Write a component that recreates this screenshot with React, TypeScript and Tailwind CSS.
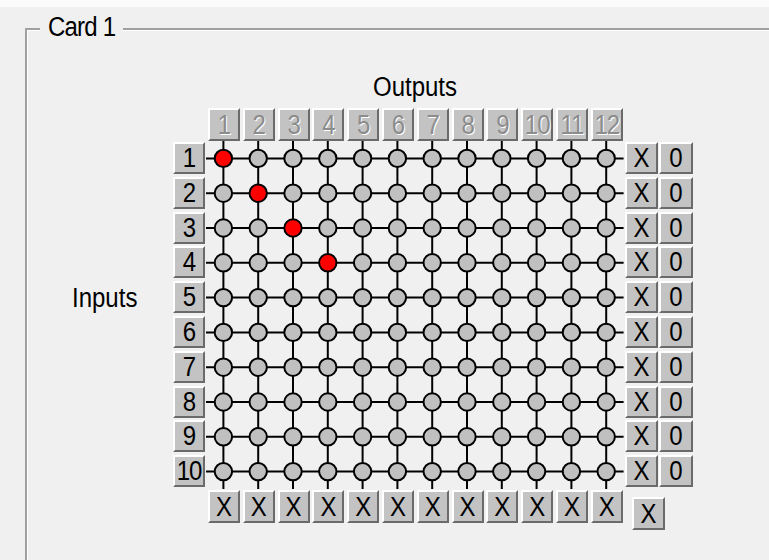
import React from 'react';

const outputs = Array.from({ length: 12 }, (_, i) => i + 1);
const inputs = Array.from({ length: 10 }, (_, i) => i + 1);
// input -> output routes that are switched on
const routes: Record<number, number> = { 1: 1, 2: 2, 3: 3, 4: 4 };

const PITCH = 34.8;

const btn =
  'flex items-center justify-center bg-[#c3c3c3] border-2 border-t-white border-l-white border-r-[#6a6a6a] border-b-[#6a6a6a] text-[24px] leading-none';

// old-style dialog font is taller than it is wide
const tall = 'inline-block scale-y-[1.15]';

function Matrix() {
  const w = PITCH * 12;
  const h = PITCH * 10;
  return (
    <svg width={w} height={h} className="block">
      {outputs.map((o) => {
        const x = PITCH / 2 + (o - 1) * PITCH;
        return <line key={'v' + o} x1={x} y1={0} x2={x} y2={h} stroke="#000" strokeWidth={2} />;
      })}
      {inputs.map((i) => {
        const y = PITCH / 2 + (i - 1) * PITCH;
        return <line key={'h' + i} x1={0} y1={y} x2={w} y2={y} stroke="#000" strokeWidth={2} />;
      })}
      {inputs.map((i) =>
        outputs.map((o) => (
          <circle
            key={i + '-' + o}
            cx={PITCH / 2 + (o - 1) * PITCH}
            cy={PITCH / 2 + (i - 1) * PITCH}
            r={8.7}
            fill={routes[i] === o ? '#ff0000' : '#c0c0c0'}
            stroke="#000"
            strokeWidth={2}
          />
        ))
      )}
    </svg>
  );
}

export default function App() {
  return (
    <div className="flex h-[560px] w-[769px] flex-col overflow-hidden bg-[#f0f0f0] font-['Liberation_Sans',Arial,sans-serif] text-black">
      <div className="h-[7px] bg-[#fbfbfb]" />

      {/* Card group box */}
      <div className="relative ml-[25px] mt-[21px] flex-1 border-l-2 border-t-2 border-[#a0a0a0] shadow-[inset_1px_1px_0_#fff]">
        <div className="absolute -top-[15px] left-[13px] bg-[#f0f0f0] px-[8px] text-[24px] leading-[24px] tracking-[-0.8px]">
          <span className={tall}>Card 1</span>
        </div>

        <div className="grid grid-cols-[146px_33px_418px_34px_35px]">
          {/* Outputs label */}
          <div className="col-start-3 pb-[9px] pt-[45px] text-center text-[24px] leading-[24px]">
            <span className={tall}>Outputs</span>
          </div>

          {/* Output header buttons */}
          <div className="col-start-3 flex h-[33px]">
            {outputs.map((o) => (
              <div key={o} className="w-[34.8px] pl-[2px]">
                <div className={btn + ' h-full w-[32px] tracking-[-1px] text-[#8c8c8c] [text-shadow:1px_1px_0_#fff]'}>
                  <span className={tall}>{o}</span>
                </div>
              </div>
            ))}
          </div>

          {/* Inputs label */}
          <div className="col-start-1 pl-[45px] pt-[145px] text-[24px] leading-[24px]">
            <span className={tall}>Inputs</span>
          </div>

          {/* Input buttons */}
          <div className="flex flex-col">
            {inputs.map((i) => (
              <div key={i} className="h-[34.8px] pt-[1px]">
                <div className={btn + ' h-[32px] w-[32px] tracking-[-1px]'}>
                  <span className={tall}>{i}</span>
                </div>
              </div>
            ))}
          </div>

          <Matrix />

          {/* Clear-row buttons */}
          <div className="flex flex-col">
            {inputs.map((i) => (
              <div key={i} className="h-[34.8px] pl-[1px] pt-[1px]">
                <div className={btn + ' h-[32px] w-[33px]'}>
                  <span className={tall}>X</span>
                </div>
              </div>
            ))}
          </div>

          {/* Row counters */}
          <div className="flex flex-col">
            {inputs.map((i) => (
              <div key={i} className="h-[34.8px] pl-[1px] pt-[1px]">
                <div className={btn + ' h-[32px] w-[34px]'}>
                  <span className={tall}>0</span>
                </div>
              </div>
            ))}
          </div>

          {/* Clear-column buttons */}
          <div className="col-start-3 flex pt-[1px]">
            {outputs.map((o) => (
              <div key={o} className="w-[34.8px] pl-[2px]">
                <div className={btn + ' h-[33px] w-[32px]'}>
                  <span className={tall}>X</span>
                </div>
              </div>
            ))}
          </div>

          {/* Clear all */}
          <div className="col-span-2 pl-[8px] pt-[8px]">
            <div className={btn + ' h-[33px] w-[33px]'}>
              <span className={tall}>X</span>
            </div>
          </div>
        </div>
      </div>
    </div>
  );
}
